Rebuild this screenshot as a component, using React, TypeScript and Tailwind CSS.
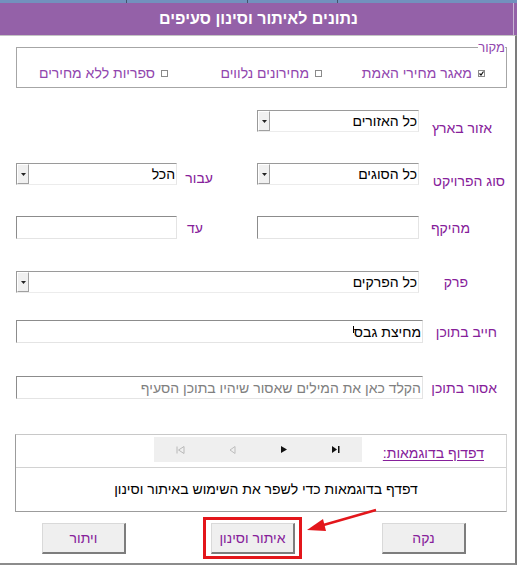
import React from 'react';

const LABEL = 'text-[14px] leading-[16px] text-[#86209a] whitespace-nowrap';

function Dropdown({ value, width }: { value: string; width: string }) {
  return (
    <div
      className={`${width} h-[22px] flex border-t border-l border-t-[#9a9a9a] border-l-[#9a9a9a] border-b border-r border-b-[#ececec] border-r-[#e6e6e6] bg-white`}
    >
      <div className="flex-1 pr-[1px] text-[14px] leading-[20px] text-black whitespace-nowrap overflow-hidden">
        {value}
      </div>
      <div className="w-[12px] h-[20px] flex items-center justify-center bg-[#f0f0f0] border-r border-b border-r-[#a0a0a0] border-b-[#a0a0a0] border-l border-t border-l-white border-t-white">
        <svg width="5" height="3" viewBox="0 0 5 3">
          <path d="M0 0h5L2.5 3z" fill="#222" />
        </svg>
      </div>
    </div>
  );
}

function TextBox({ width, children }: { width: string; children?: React.ReactNode }) {
  return (
    <div
      className={`${width} h-[23px] flex items-center border-t border-l border-t-[#8c8c8c] border-l-[#8c8c8c] border-b border-r border-b-[#e4e4e4] border-r-[#e4e4e4] bg-white pr-[1px] text-[14px] leading-[20px] whitespace-nowrap overflow-hidden`}
    >
      {children}
    </div>
  );
}

function Check({ checked, label, width }: { checked?: boolean; label: string; width?: string }) {
  return (
    <div className={`flex items-center gap-[6px] ${width ?? ''}`}>
      <span className="w-[7px] h-[7px] border border-[#8a8a8a] bg-white flex items-center justify-center">
        {checked && (
          <svg width="5" height="5" viewBox="0 0 5 5">
            <path d="M0.5 2.5l1.5 1.5 2.5-3.5" stroke="#111" strokeWidth="1.2" fill="none" />
          </svg>
        )}
      </span>
      <span className="text-[14px] leading-[16px] text-[#9146ae] whitespace-nowrap">{label}</span>
    </div>
  );
}

function Btn({ children }: { children: React.ReactNode }) {
  return (
    <button className="w-[84px] h-[31px] bg-[#efefef] border-t border-l border-t-[#d9d9d9] border-l-[#d9d9d9] border-b-2 border-r-2 border-b-[#7d7d7d] border-r-[#7d7d7d] text-[14px] text-[#86209a]">
      {children}
    </button>
  );
}

export default function App() {
  return (
    <div
      dir="rtl"
      className="relative w-[517px] h-[566px] overflow-hidden bg-white font-['Liberation_Sans',Arial,sans-serif]"
    >
      {/* tab strip peeking above the popup */}
      <div dir="ltr" className="h-[3px] flex overflow-hidden bg-[#7291bd]">
        <div className="w-[127px] border-r border-[#44556e] pl-[7px]">
          <span className="block -mt-[10px] text-[12px] leading-[13px] font-bold text-[#1c2533]">אמוד מחיר</span>
        </div>
        <div className="w-[121px] border-r border-[#44556e]" />
        <div className="w-[90px] border-r border-[#44556e]" />
        <div className="flex-1" />
      </div>

      <div className="h-[32px] flex items-center justify-center bg-[#9461a8] text-white font-bold text-[16px] shadow-[inset_-3px_0_0_#9461a8,inset_-4px_0_0_#c9b4d4]">
        נתונים לאיתור וסינון סעיפים
      </div>

      <div className="h-[530px] flex flex-col border-t border-t-[#c4c4c4] border-r-2 border-r-[#7c7c7c] border-b-2 border-b-[#8c8c8c]">
        {/* source */}
        <fieldset className="mt-[4px] ml-[16px] mr-[8px] h-[48px] border border-t-[#a6a6a6] border-r-[#a6a6a6] border-l-[#a6a6a6] border-b-[#a6a6a6]">
          <legend className="mr-[1px] text-[13px] leading-[15px] text-[#9146ae]">מקור</legend>
          <div className="mt-[10px] h-[16px] flex items-center pr-[21px]">
            <Check checked label="מאגר מחירי האמת" width="w-[163px]" />
            <Check label="מחירונים נלווים" width="w-[154px]" />
            <Check label="ספריות ללא מחירים" />
          </div>
        </fieldset>

        {/* region */}
        <div className="mt-[22px] h-[22px] flex">
          <div className="w-[96px] pr-[23px] pt-[6px]">
            <span className={LABEL}>אזור בארץ</span>
          </div>
          <Dropdown value="כל האזורים" width="w-[162px]" />
        </div>

        {/* project type / for */}
        <div className="mt-[31px] h-[22px] flex">
          <div className="w-[96px] pr-[10px] pt-[6px]">
            <span className={LABEL}>סוג הפרויקט</span>
          </div>
          <Dropdown value="כל הסוגים" width="w-[162px]" />
          <div className="w-[80px] pr-[44px] pt-[3px]">
            <span className={LABEL}>עבור</span>
          </div>
          <Dropdown value="הכל" width="w-[161px]" />
        </div>

        {/* scope */}
        <div className="mt-[31px] h-[23px] flex items-center">
          <div className="w-[96px] pr-[45px]">
            <span className={LABEL}>מהיקף</span>
          </div>
          <TextBox width="w-[162px]" />
          <div className="w-[80px] pr-[54px]">
            <span className={LABEL}>עד</span>
          </div>
          <TextBox width="w-[161px]" />
        </div>

        {/* chapter */}
        <div className="mt-[32px] h-[22px] flex items-center">
          <div className="w-[96px] pr-[47px]">
            <span className={LABEL}>פרק</span>
          </div>
          <Dropdown value="כל הפרקים" width="w-[403px]" />
        </div>

        {/* must contain */}
        <div className="mt-[27px] h-[23px] flex items-center">
          <div className="w-[92px] pr-[18px]">
            <span className={LABEL}>חייב בתוכן</span>
          </div>
          <TextBox width="w-[407px]">
            <span className="text-black">מחיצת גבס</span>
            <span className="w-[1px] h-[7px] bg-black self-start mt-[5px]" />
          </TextBox>
        </div>

        {/* must not contain */}
        <div className="mt-[33px] h-[23px] flex items-center">
          <div className="w-[92px] pr-[18px]">
            <span className={LABEL}>אסור בתוכן</span>
          </div>
          <TextBox width="w-[407px]">
            <span className="text-[#808080]">הקלד כאן את המילים שאסור שיהיו בתוכן הסעיף</span>
          </TextBox>
        </div>

        {/* examples */}
        <div className="mt-[35px] ml-[15px] mr-[8px] h-[78px] flex flex-col border-t border-t-[#c8c8c8] border-l border-l-[#9c9c9c] border-r border-r-[#d4d4d4] border-b border-b-[#9c9c9c]">
          <div className="h-[33px] flex border-b border-b-[#d2d2d2]">
            <div className="w-[144px] pr-[22px] pt-[6px]">
              <span className="text-[14px] leading-[16px] text-[#86209a] underline underline-offset-2 whitespace-nowrap">
                דפדוף בדוגמאות:
              </span>
            </div>
            <div dir="ltr" className="mt-[2px] w-[208px] h-[25px] flex bg-[#efefef]">
              <div className="w-[52px] flex items-center justify-center">
                <svg width="9" height="8" viewBox="0 0 9 8">
                  <path d="M1 0.5v7" stroke="#b8b8b8" />
                  <path d="M8 0.5L2.5 4L8 7.5z" stroke="#b8b8b8" fill="none" />
                </svg>
              </div>
              <div className="w-[52px] flex items-center justify-center">
                <svg width="7" height="8" viewBox="0 0 7 8">
                  <path d="M6 0.5L1 4L6 7.5z" stroke="#bdbdbd" fill="none" />
                </svg>
              </div>
              <div className="w-[52px] flex items-center justify-center">
                <svg width="6" height="7" viewBox="0 0 6 7">
                  <path d="M0 0L6 3.5L0 7z" fill="#111" />
                </svg>
              </div>
              <div className="w-[52px] flex items-center justify-center">
                <svg width="8" height="7" viewBox="0 0 8 7">
                  <path d="M0 0L5 3.5L0 7z" fill="#111" />
                  <path d="M6 0h1.5v7H6z" fill="#111" />
                </svg>
              </div>
            </div>
          </div>
          <div className="flex-1 flex items-center justify-center pl-[10px] text-[14px] text-black">
            דפדף בדוגמאות כדי לשפר את השימוש באיתור וסינון
          </div>
        </div>

        {/* actions */}
        <div className="mt-[11px] flex pr-[49px]">
          <Btn>נקה</Btn>
          <div className="relative mr-[87px]">
            <Btn>איתור וסינון</Btn>
            <div className="absolute -left-[8px] -right-[7px] -top-[6px] -bottom-[5px] border-[3px] border-[#e3161b] pointer-events-none" />
          </div>
          <div className="mr-[85px]">
            <Btn>ויתור</Btn>
          </div>
        </div>
      </div>

      {/* annotation arrow */}
      <svg className="absolute left-0 top-0 pointer-events-none" width="517" height="566">
        <line x1="376" y1="510" x2="320" y2="526" stroke="#e3161b" strokeWidth="2.5" />
        <polygon points="307,530 323,519 326,531" fill="#e3161b" />
      </svg>
    </div>
  );
}
